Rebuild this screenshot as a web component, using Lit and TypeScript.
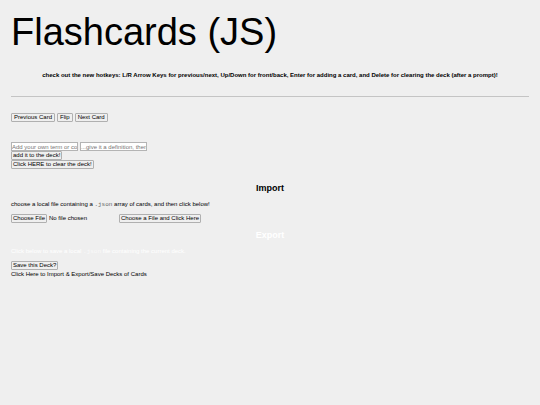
import { LitElement, html, css } from "lit";
import { customElement } from "lit/decorators.js";

@customElement("app-root")
export class AppRoot extends LitElement {
  static styles = css`
    :host {
      display: block;
      box-sizing: border-box;
      min-height: 100vh;
      padding: 10px 11px;
      background: #efefef;
      color: #000;
      font: 6px/8px "Liberation Sans", Arial, sans-serif;
    }
    h1, h2, p, hr, form { margin: 0; }
    .title { font-size: 38px; line-height: 44px; font-weight: 400; }
    .hint { margin-top: 17px; text-align: center; font-weight: 700; }
    .rule { margin: 17px 0 16px; border: 0; border-top: 1px solid #c4c4c4; }
    .row { display: flex; align-items: center; gap: 2px; }
    .stack { display: flex; flex-direction: column; align-items: flex-start; }
    .entry { margin-top: 20px; }
    button, input::file-selector-button {
      box-sizing: border-box;
      height: 9px;
      margin: 0;
      padding: 0 1px;
      border: 1px solid #b0b0b0;
      border-radius: 1px;
      background: #efefef;
      color: #000;
      font: 6px/7px "Liberation Sans", Arial, sans-serif;
      white-space: nowrap;
    }
    .controls button { padding: 0 2px; }
    .text {
      box-sizing: border-box;
      width: 67px;
      height: 9px;
      margin: 0;
      padding: 0;
      border: 1px solid #b4b4b4;
      background: #fff;
      font: 6px/7px "Liberation Sans", Arial, sans-serif;
    }
    .text::placeholder { color: #757575; }
    .heading { text-align: center; font-size: 9px; line-height: 12px; }
    .import { margin-top: 13px; }
    .note { margin: 6px 0 5px; }
    .code { font: 6px/8px "Liberation Mono", "Courier New", monospace; color: #666; }
    .file { width: 106px; height: 9px; font: inherit; }
    .file::file-selector-button { margin-right: 2px; }
    .export { margin-top: 6px; color: #fff; }
    .export .code { color: #fafafa; }
  `;

  render() {
    return html`
      <h1 class="title">Flashcards (JS)</h1>
      <p class="hint">check out the new hotkeys: L/R Arrow Keys for previous/next, Up/Down for front/back, Enter for adding a card, and Delete for clearing the deck (after a prompt)!</p>
      <hr class="rule" />
      <div class="row controls">
        <button>Previous Card</button>
        <button>Flip</button>
        <button>Next Card</button>
      </div>
      <form class="stack entry" @submit=${(e: Event) => e.preventDefault()}>
        <div class="row">
          <input class="text" type="text" aria-label="Term" placeholder="Add your own term or concept" />
          <input class="text" type="text" aria-label="Definition" placeholder="...give it a definition, then" />
        </div>
        <button type="submit">add it to the deck!</button>
        <button type="button">Click HERE to clear the deck!</button>
      </form>
      <section class="import">
        <h2 class="heading">Import</h2>
        <p class="note" id="import-note">choose a local file containing a <code class="code">.json</code> array of cards, and then click below!</p>
        <div class="row">
          <input class="file" type="file" aria-labelledby="import-note" />
          <button>Choose a File and Click Here</button>
        </div>
      </section>
      <section class="export">
        <h2 class="heading">Export</h2>
        <p class="note">Click below to save a local <code class="code">.json</code> file containing the current deck.</p>
        <div class="row"><button>Save this Deck?</button></div>
      </section>
      <p>Click Here to Import &amp; Export/Save Decks of Cards</p>
    `;
  }
}
